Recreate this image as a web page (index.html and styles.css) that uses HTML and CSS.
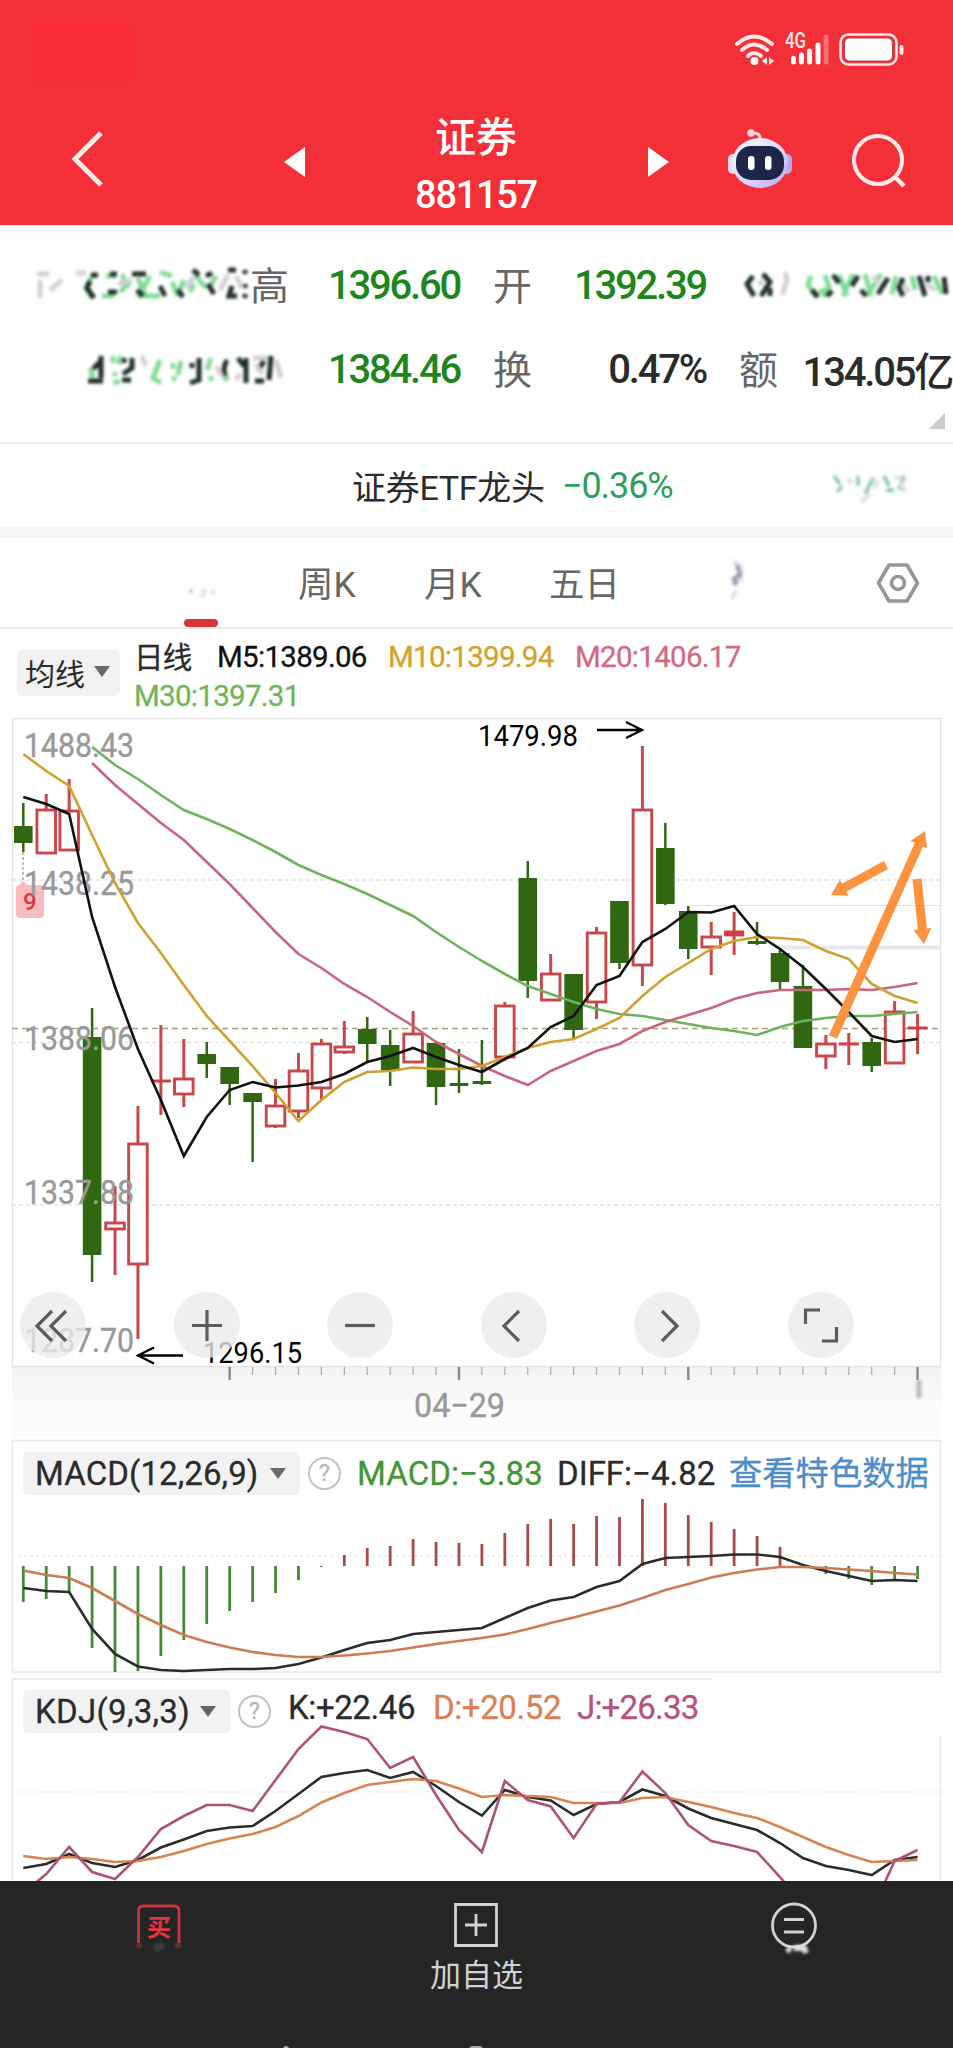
FILE: index.html
```html
<!DOCTYPE html>
<html lang="zh-CN">

<head>
    <meta charset="UTF-8">
    <meta name="viewport" content="width=device-width, initial-scale=1.0">
    <title>证券 881157</title>
    <link rel="stylesheet" href="styles.css">
</head>

<body>
    <header class="header">
        <div class="status-bar">
            <div class="carrier"></div>
            <svg class="status-icons" width="180" height="36" viewBox="730 30 180 36">
                <g fill="none" stroke="#ffe9e9" stroke-width="4" stroke-linecap="round">
                    <path d="M737 44 Q754 29 772 44" />
                    <path d="M742 50 Q754 39 767 50" />
                    <path d="M748 56 Q754 50 761 56" />
                </g>
                <circle cx="754.500" cy="61" r="4" fill="#fff" />
                <path d="M767 57v8l-5-4zM769 57v8l5-4z" fill="#ffe9e9" />
                <text x="785" y="48" class="net" textLength="21" lengthAdjust="spacingAndGlyphs">4G</text>
                <g stroke="#fff" stroke-width="5" stroke-linecap="round">
                    <path d="M793.500 58.500V62M801.500 55V62M809.500 51V62M818 45V62" />
                    <path d="M826 37V62" opacity=".3" />
                </g>
                <rect x="840.500" y="34.500" width="56" height="30" rx="8" fill="none" stroke="#ffe9e9" stroke-width="2.500" />
                <rect x="844.500" y="38" width="48" height="23" rx="5" fill="#fff" stroke="#a8484e" stroke-width="1" />
                <rect x="899.500" y="45" width="4" height="10" rx="2" fill="#ffe9e9" />
            </svg>
        </div>
        <div class="nav">
            <svg class="back" width="40" height="64" viewBox="0 0 40 64">
                <path d="M34 7 8 33 34 59" fill="none" stroke="#ffe9e9" stroke-width="5" />
            </svg>
            <svg class="prev" width="22" height="30" viewBox="0 0 22 30"><path d="M21 0V30L0 15z" fill="#fff" /></svg>
            <div class="title">
                <h1>证券</h1>
                <p>881157</p>
            </div>
            <svg class="next" width="22" height="30" viewBox="0 0 22 30"><path d="M1 0V30L22 15z" fill="#fff" /></svg>
            <svg class="robot" width="66" height="60" viewBox="727 129 66 60">
                <defs>
                    <linearGradient id="shell" x1="0" y1="0" x2="1" y2="1">
                        <stop offset="0" stop-color="#fff" />
                        <stop offset=".55" stop-color="#ddd6fb" />
                        <stop offset="1" stop-color="#b3a8f2" />
                    </linearGradient>
                </defs>
                <path d="M751 133q10-1 9 7" fill="none" stroke="#ffd5dc" stroke-width="3" />
                <circle cx="751" cy="133" r="3.800" fill="#ffd5dc" />
                <rect x="728" y="154" width="10" height="20" rx="5" fill="#e8dcf6" />
                <rect x="782" y="154" width="10" height="20" rx="5" fill="#b7a9ef" />
                <ellipse cx="760" cy="163" rx="28" ry="25" fill="url(#shell)" />
                <rect x="736" y="146" width="48" height="34" rx="15" fill="#1c2748" />
                <rect x="748" y="156" width="6.500" height="14" rx="3" fill="#fff" />
                <rect x="765" y="156" width="6.500" height="14" rx="3" fill="#fff" />
            </svg>
            <svg class="search" width="56" height="56" viewBox="0 0 56 56">
                <circle cx="27" cy="27" r="24" fill="none" stroke="#ffe9e9" stroke-width="4" />
                <path d="M43 43 53 53" stroke="#ffe9e9" stroke-width="4.500" />
            </svg>
        </div>
    </header>

    <section class="quotes">
        <svg class="masked" width="275" height="130" viewBox="20 260 275 130">
            <g class="smudge">
                <path class="faint" d="M37 274h12M40 280v18M76 273h10M50 290l12-10" />
                <path class="lime" d="M92 276l-6 12 6 10M106 276h10M122 274l6 14M138 278l8 20M150 276l-12 22M160 272l12 4M172 282l6 14M184 280l-6 14M196 276l10 12M216 276l-6 10M102 296h12M120 292l10-10M146 296h14M190 292l4-8" />
                <path class="dark" d="M91 275h7M110 274h7M90 281l-3 7 7 10M108 292h9M132 274h14M137 290l6 6M160 286l5 10M178 290l5 7M193 270l6 5M206 276l6-3M208 284l6 10M228 270h8M232 286l-3 10h8M245 270v4M245 284v4M245 294v4" />
                <path class="faint" d="M220 290l8-15M236 276l6 12M118 284l14-4M186 288l8-12" />
                <path class="dark" d="M101 356v22M101 361l-8 8M88 381h15M124 358v5M132 358v10l-9 6M122 380h9M199 358v22l-9 3M192 363v5M227 360q-6 10 0 20M246 358v25M255 381h9M264 361l-6 10M271 356l-2 24M238 358l6 8" />
                <path class="lime" d="M90 368l3 10M113 356v7M115 372v4M113 382h7M160 360l-7 18 8 5M173 363v6M174 376v5M181 361l-3 14M211 358l-4 12M211 376v5M223 378h5M121 356l-3 8" />
                <path class="faint" d="M240 374l-4 6M253 358h14M276 360l5 18M142 356l4 10M216 366l6 10M256 364l6 10" />
            </g>
        </svg>
        <div class="quote-rows">
            <div class="pair"><span>高</span><b class="down">1396.60</b></div>
            <div class="pair"><span>开</span><b class="down">1392.39</b></div>
            <svg class="masked-right" width="212" height="50" viewBox="741 260 212 50">
                <g class="smudge">
                    <path class="dark" d="M754 276l-6 8 7 12M764 274l7 8-9 14M771 288v8" />
                    <path class="faint" d="M786 272l2 8-5 15M760 280l3 5" />
                    <path class="lime" d="M812 276l-3 9 8 11M826 275l4 12-6 10M840 275l8 21M854 274l-10 22M866 274l6 22M882 274l-14 22M897 276l-4 18M913 276l3 14M935 276l8 18M820 292l12-4" />
                    <path class="dark" d="M834 275l6 8M833 291l-5 5M859 276l-6 10M862 290l5 6M889 278l-10 16M904 278l-4 10 4 8M920 276l6 20M929 276v6M945 277l2 17M813 290l6 7" />
                    <path class="faint" d="M874 276l6 8M910 292l-6-8M936 290l-8-6" />
                </g>
            </svg>
            <div class="pair only"><b class="down">1384.46</b></div>
            <div class="pair"><span>换</span><b>0.47%</b></div>
            <div class="pair"><span>额</span><b>134.05亿</b></div>
        </div>
        <div class="corner"></div>
    </section>

    <section class="etf">
        <span>证券ETF龙头</span>
        <span class="pct">−0.36%</span>
        <svg class="masked-etf" width="100" height="44" viewBox="820 466 100 44">
            <g class="smudge thin">
                <path class="teal" d="M834 478l6 8M842 488l-5 6M858 478v10M873 480l-8 16M884 478l5 10M886 492h8M904 478l-5 14" />
                <path class="faint" d="M848 480l3 6M862 504l8-10M878 482l-4 8M894 480h8M900 484l5 10" />
            </g>
        </svg>
    </section>

    <nav class="tabs">
        <div class="tab active"><svg width="32" height="14" viewBox="0 0 32 14"><g class="smudge thin"><path class="lime" d="M7 2v4" /><path class="faint" d="M21 2l-3 8M29 3v5" /></g></svg><i></i></div>
        <div class="tab">周K</div>
        <div class="tab">月K</div>
        <div class="tab">五日</div>
        <svg class="more" width="40" height="64" viewBox="720 560 40 64">
            <g class="smudge thin"><path class="faint" d="M733 570l8 6v12l-9 5M736 600l-4 8" /><path class="mauve" d="M737 574l3 10-8 5M737 590l-3 4" /></g>
        </svg>
        <svg class="setting" width="44" height="42" viewBox="0 0 44 42">
            <path d="M13 3H31L41.500 21 31 39H13L2.500 21z" fill="none" stroke="#969696" stroke-width="3.600" stroke-linejoin="round" />
            <circle cx="22" cy="21" r="6.500" fill="none" stroke="#969696" stroke-width="3.600" />
        </svg>
    </nav>

    <section class="ma">
        <div class="chip ma-chip">均线<i></i></div>
        <div class="ma-values">
            <span class="cn">日线</span>
            <span class="m5">M5:1389.06</span>
            <span class="m10">M10:1399.94</span>
            <span class="m20">M20:1406.17</span>
            <span class="m30">M30:1397.31</span>
        </div>
    </section>

    <section class="kline">
        <svg id="kline" width="953" height="720" viewBox="0 716 953 720"></svg>
        <div class="controls">
            <button><svg viewBox="0 0 66 66"><path d="M32 19 17 34l15 15M46 19 31 34l15 15" /></svg></button>
            <button><svg viewBox="0 0 66 66"><path d="M33 18V49M18 33.500H48" /></svg></button>
            <button><svg viewBox="0 0 66 66"><path d="M18 33.500H48" /></svg></button>
            <button><svg viewBox="0 0 66 66"><path d="M38 19 23 34l15 15" /></svg></button>
            <button><svg viewBox="0 0 66 66"><path d="M28 19 43 34 28 49" /></svg></button>
            <button><svg viewBox="0 0 66 66"><path d="M17.500 32V18H32M34 49H48.500V35" /></svg></button>
        </div>
    </section>

    <section class="sub macd">
        <svg id="macd" width="953" height="240" viewBox="0 1436 953 240"></svg>
        <div class="legend">
            <div class="chip macd-chip">MACD(12,26,9)<i></i></div>
            <div class="help">?</div>
            <span class="macd-val">MACD:−3.83</span>
            <span class="diff-val">DIFF:−4.82</span>
            <a class="link">查看特色数据</a>
        </div>
    </section>

    <section class="sub kdj">
        <svg id="kdj" width="953" height="205" viewBox="0 1676 953 205"></svg>
        <div class="legend">
            <div class="chip kdj-chip">KDJ(9,3,3)<i></i></div>
            <div class="help">?</div>
            <span class="k-val">K:+22.46</span>
            <span class="d-val">D:+20.52</span>
            <span class="j-val">J:+26.33</span>
        </div>
    </section>

    <footer class="footer">
        <div class="item">
            <svg width="60" height="60" viewBox="128 1896 60 60">
                <path d="M137.500 1943V1911q0-5 5-5H173q5 0 5 5V1943" fill="none" stroke="#c9363c" stroke-width="2.800" />
                <text x="146" y="1936" class="buy">买</text>
                <g class="smudge"><path d="M138 1944v3M177 1944v3" stroke="#a04038" /><path d="M153 1949l10-4" stroke="#344040" stroke-width="7" /></g>
            </svg>
        </div>
        <div class="item">
            <svg width="46" height="46" viewBox="0 0 46 46">
                <path d="M2.500 2.500H43.500V43.500H2.500zM23 12V34M12 23H34" fill="none" stroke="#d2d2d2" stroke-width="2.800" />
            </svg>
            <span>加自选</span>
        </div>
        <div class="item">
            <svg width="60" height="66" viewBox="764 1896 60 66">
                <circle cx="794" cy="1925.500" r="21.500" fill="none" stroke="#d2d2d2" stroke-width="2.800" />
                <path d="M784 1919.500H804M784 1932H804" stroke="#d2d2d2" stroke-width="2.800" />
                <g class="smudge"><path d="M787 1948l4 3M794 1948h10l2 5" stroke="#e4e4e4" stroke-width="6" /></g>
            </svg>
        </div>
        <div class="gesture"><i></i><i></i></div>
    </footer>

    <script src="script.js"></script>
</body>

</html>
```
FILE: styles.css
```css
* {
    margin: 0;
    padding: 0;
    box-sizing: border-box;
}

body {
    width: 953px;
    height: 2048px;
    overflow: hidden;
    background: #fff;
    color: #2b2b2b;
    font-family: Roboto, "Noto Sans CJK SC", sans-serif;
}

svg {
    display: block;
}

/* header */
.header {
    height: 225px;
    background: #f33038;
    color: #fff;
}

.status-bar {
    height: 96px;
    display: flex;
    justify-content: space-between;
    padding: 24px 43px 0 32px;
}

.carrier {
    width: 101px;
    height: 57px;
    background: #f72b37;
}

.status-icons {
    margin-top: 6px;
}

.net {
    font-size: 22px;
    font-weight: 500;
    fill: #ffe9e9;
}

.nav {
    height: 129px;
    display: grid;
    grid-template-columns: 67px 215px 133px 234px 79px 122px 103px;
}

.back {
    grid-column: 2;
    margin-top: 30px;
}

.prev {
    grid-column: 3;
    margin: 51px 0 0 2px;
}

.title {
    grid-column: 4;
    margin-left: -56px;
    width: 234px;
    text-align: center;
}

.title h1 {
    margin-top: 17px;
    font-size: 41px;
    font-weight: 500;
    line-height: 50px;
}

.title p {
    font-size: 38px;
    font-weight: 500;
    line-height: 64px;
    letter-spacing: -1.3px;
}

.next {
    grid-column: 5;
    margin: 51px 0 0 -2px;
}

.robot {
    grid-column: 6;
    margin: 33px 0 0 -1px;
}

.search {
    grid-column: 7;
    margin: 37px 0 0 1px;
}

/* unreadable, masked values */
.smudge {
    fill: none;
    stroke-width: 5;
    filter: blur(1.7px);
}

.thin {
    stroke-width: 4;
    opacity: 0.7;
}

.faint {
    stroke: #d5cfd8;
}

.lime {
    stroke: #7fdc93;
}

.dark {
    stroke: #1d2d26;
}

.teal {
    stroke: #5fb59c;
}

.mauve {
    stroke: #7b6690;
}

/* quotes */
.quotes {
    height: 219px;
    display: grid;
    grid-template-columns: 251px 702px;
    border-bottom: 2px solid #ededed;
}

.masked {
    grid-area: 1 / 1;
    margin: 35px 0 0 20px;
}

.quote-rows {
    grid-area: 1 / 2;
    display: grid;
    grid-template-columns: 209px 212px 212px;
    grid-template-rows: 84px 84px;
    column-gap: 34px;
    padding-top: 18px;
}

.pair {
    display: flex;
    justify-content: space-between;
    align-items: center;
    height: 84px;
    white-space: nowrap;
}

.only {
    justify-content: flex-end;
}

.pair span {
    margin: -4px 0 0 -1px;
    font-size: 39px;
    color: #666;
}

.pair b {
    font-size: 40px;
    font-weight: 500;
    letter-spacing: -2.2px;
}

.pair .down {
    color: #1d861d;
}

.masked-right {
    margin-top: 17px;
}

.corner {
    grid-area: 1 / 2;
    place-self: end;
    margin: 0 8px 13px 0;
    border-left: 16px solid transparent;
    border-bottom: 16px solid #ccc;
}

/* etf */
.etf {
    height: 94px;
    display: flex;
    align-items: center;
    padding-left: 352px;
    border-bottom: 11px solid #f5f5f5;
    font-size: 34px;
    white-space: nowrap;
}

.etf span:first-child {
    width: 192px;
    letter-spacing: -0.3px;
}

.etf .pct {
    width: 258px;
    margin-left: 18px;
    font-size: 36px;
    letter-spacing: -1.1px;
    color: #2f9e63;
}

/* tabs */
.tabs {
    height: 91px;
    display: grid;
    grid-template-columns: 184px 114px 126px 125px 171px 156px 77px;
    align-items: center;
    border-bottom: 2px solid #ebebeb;
    font-size: 35.5px;
    color: #666;
}

.tab {
    margin-top: -2px;
}

.tabs .active {
    grid-column: 2;
    align-self: end;
    width: 34px;
}

.active i {
    display: block;
    height: 8px;
    margin-top: 18px;
    background: #d6353a;
    border-radius: 4px;
}

/* moving averages */
.ma {
    height: 87px;
    display: flex;
    padding: 8px 0 0 17px;
}

.chip {
    display: flex;
    align-items: center;
    background: #f2f2f2;
    border-radius: 5px;
    white-space: nowrap;
}

.chip i {
    border: 8px solid transparent;
    border-top: 11px solid #686868;
    border-bottom: 0;
}

.ma-chip {
    width: 103px;
    height: 46px;
    margin-top: 13px;
    padding: 0 0 3px 8px;
    gap: 9px;
    font-size: 30px;
}

.ma-values {
    width: 640px;
    margin-left: 14px;
    display: grid;
    grid-template-columns: 83px 171px 187px 187px;
    grid-template-rows: 39px 39px;
    align-items: center;
    font-size: 29.5px;
    -webkit-text-stroke: 0.3px;
    letter-spacing: -0.7px;
    white-space: nowrap;
}

.cn {
    margin-top: -3px;
}

.m5 {
    color: #111;
}

.m10 {
    color: #d2a22d;
}

.m20 {
    color: #d06a80;
}

.m30 {
    color: #70b55b;
}

/* k line chart */
.kline {
    display: grid;
    height: 720px;
}

.kline > * {
    grid-area: 1 / 1;
}

.controls {
    align-self: end;
    display: flex;
    gap: 87.5px;
    padding: 0 0 78px 20px;
}

.controls button {
    width: 66px;
    height: 66px;
    border: none;
    border-radius: 50%;
    background: rgba(234, 234, 234, 0.78);
}

.controls path {
    fill: none;
    stroke: #5c5c5c;
    stroke-width: 3.2;
}

.axis-text {
    font-size: 33px;
    fill: #999;
    stroke: #999;
    stroke-width: 0.4;
}

.mark-text {
    font-size: 29px;
    fill: #000;
}

/* sub charts */
.sub {
    display: grid;
}

.sub > * {
    grid-area: 1 / 1;
}

.legend {
    display: flex;
    align-items: center;
    align-self: start;
    font-size: 33px;
    line-height: 42px;
    -webkit-text-stroke: 0.3px;
    white-space: nowrap;
}

.macd .legend {
    padding: 16px 0 0 23px;
}

.kdj .legend {
    padding: 14px 0 0 23px;
}

.macd-chip,
.kdj-chip {
    height: 43px;
    padding-left: 12px;
    justify-content: space-between;
    padding-right: 14px;
}

.macd-chip {
    width: 277px;
    letter-spacing: 0.1px;
}

.kdj-chip {
    width: 207px;
    letter-spacing: 0.3px;
}

.help {
    width: 33px;
    height: 33px;
    margin-left: 8px;
    border: 2px solid #c2c2c2;
    border-radius: 50%;
    color: #b5b5b5;
    font-size: 23px;
    line-height: 29px;
    text-align: center;
}

.macd-val {
    width: 200px;
    margin-left: 16px;
    letter-spacing: 0.1px;
    color: #439636;
}

.diff-val {
    width: 172px;
}

.link {
    font-size: 33.3px;
    color: #4c8dc9;
}

.k-val {
    width: 145px;
    margin: -8px 0 0 17px;
    letter-spacing: -0.4px;
}

.d-val {
    width: 144px;
    margin-top: -8px;
    letter-spacing: -0.4px;
    color: #dc8052;
}

.j-val {
    margin-top: -8px;
    letter-spacing: -0.8px;
    color: #b5527f;
}

/* footer */
.footer {
    position: relative;
    height: 167px;
    display: grid;
    grid-template-columns: 1fr 1fr 1fr;
    background: #252525;
    color: #d2d2d2;
}

.item {
    display: flex;
    flex-direction: column;
    align-items: center;
    padding-top: 15px;
    font-size: 31px;
    line-height: 40px;
}

.item:nth-child(2) {
    padding-top: 21px;
    gap: 8px;
}

.buy {
    font-size: 24px;
    font-weight: 700;
    fill: #e8343b;
}

.gesture {
    position: absolute;
    left: 283px;
    right: 470px;
    bottom: 0;
    height: 2px;
    overflow: hidden;
    display: flex;
    justify-content: space-between;
}

.gesture i {
    width: 6px;
    height: 8px;
    border-radius: 4px;
    background: #aaa;
}

.gesture i + i {
    width: 14px;
}
```
FILE: script.js
```js
const STEP = 22.93;
const LEFT = 23.3;
const px = i => LEFT + i * STEP;

const RED = '#c8474a';
const GREEN = '#306812';

// [high, body top, body bottom, low, up/down]
const candles = [
    [803, 826, 843, 852, 'd'], [794, 810, 853, 853, 'u'], [779, 811, 850, 850, 'u'], [1008, 1037, 1255, 1282, 'd'],
    [1186, 1223, 1229, 1275, 'u'], [1106, 1144, 1264, 1339, 'u'], [1025, 1081, 1081, 1115, 'u'], [1039, 1079, 1094, 1107, 'u'],
    [1042, 1054, 1064, 1078, 'd'], [1067, 1067, 1084, 1105, 'd'], [1093, 1093, 1102, 1162, 'd'], [1079, 1106, 1126, 1128, 'u'],
    [1053, 1071, 1111, 1118, 'u'], [1039, 1044, 1088, 1099, 'u'], [1021, 1047, 1052, 1054, 'u'], [1017, 1029, 1044, 1062, 'd'],
    [1030, 1045, 1070, 1086, 'd'], [1011, 1034, 1062, 1063, 'u'], [1043, 1043, 1087, 1105, 'd'], [1049, 1083, 1086, 1093, 'd'],
    [1040, 1081, 1084, 1085, 'd'], [1002, 1006, 1057, 1061, 'u'], [861, 878, 981, 998, 'd'], [954, 974, 1000, 1000, 'u'],
    [974, 974, 1030, 1038, 'd'], [927, 933, 1002, 1019, 'u'], [901, 901, 963, 969, 'd'], [746, 810, 965, 986, 'u'],
    [823, 848, 904, 905, 'd'], [906, 911, 949, 959, 'd'], [922, 937, 947, 975, 'u'], [912, 932, 934.9, 955, 'u'],
    [922, 941, 944, 945, 'd'], [950, 953, 982, 989, 'd'], [965, 986, 1048, 1048, 'd'], [1035, 1044, 1056, 1069, 'u'],
    [1033, 1044, 1044, 1065, 'u'], [1038, 1042, 1066, 1072, 'd'], [1001, 1012, 1063, 1064, 'u'], [1014, 1028, 1028, 1054, 'u']
];

const ma5 = [797, 804, 814, 917, 987, 1049, 1100, 1156, 1117, 1090, 1082, 1087.5, 1085.5, 1082, 1074, 1062, 1056, 1048, 1057, 1065, 1072, 1059, 1048, 1027, 1016, 985, 976, 942, 929, 912, 912.5, 906, 934, 949, 967, 989, 1012, 1036, 1042, 1039];
const ma10 = [754, 771, 786, 835, 883, 923, 953, 985, 1016, 1041, 1066, 1093, 1121, 1100, 1082, 1072, 1071, 1067.5, 1069, 1069, 1066, 1057, 1048, 1042, 1039, 1029, 1018, 996, 977, 963, 949, 941, 937, 938, 940, 951, 959, 984, 996, 1003];
const ma20 = [763, 785, 804, 823, 840, 862, 884, 908, 932, 954, 968, 984, 997, 1012, 1026, 1042, 1054, 1066, 1076, 1085, 1071, 1061, 1051, 1044, 1031, 1022, 1015, 1008, 999, 993, 990, 990, 990, 989, 990, 987, 983];
const ma30 = [747, 765, 779, 795, 810, 819, 829, 840, 852, 865, 875, 884, 894, 905, 916, 932, 947, 961, 974, 986, 994, 1002, 1009, 1014, 1016, 1020, 1024, 1028, 1031, 1035, 1027, 1021, 1018, 1016, 1016, 1014, 1012];

const macdBars = [1602, 1599, 1592, 1648, 1672, 1671, 1656, 1640, 1624, 1611, 1602, 1593, 1580, 1567, 1555, 1548, 1546, 1539, 1542, 1543, 1544, 1533, 1524, 1519, 1524, 1516, 1517, 1499, 1503, 1515, 1522, 1529, 1536, 1547, 1566, 1574, 1579, 1585, 1581, 1579];
const diff = [1588, 1591, 1592, 1629, 1654, 1666.5, 1670, 1671, 1670, 1669, 1669, 1668, 1664, 1657.5, 1650, 1643, 1640, 1634, 1632, 1630, 1628, 1618, 1608, 1600.5, 1597, 1587, 1581, 1564, 1558, 1557, 1556, 1554.5, 1554.5, 1557, 1565, 1571, 1576, 1581, 1580, 1581];
const dea = [1570.5, 1575, 1578, 1588, 1601, 1614, 1625, 1635, 1642, 1647.5, 1652, 1655, 1657, 1657, 1655.5, 1653.5, 1651, 1647.5, 1644, 1641, 1638, 1634.5, 1629, 1623, 1617.5, 1611.5, 1605.5, 1598, 1590, 1584, 1577.5, 1573, 1569.5, 1567, 1567, 1568, 1569.5, 1571, 1573, 1574.5];

const k = [1868, 1864, 1854, 1863, 1867, 1860, 1847.5, 1839.5, 1831, 1827.5, 1826, 1811, 1794, 1777, 1773, 1770, 1778, 1772, 1786, 1802, 1815.5, 1790, 1797, 1800.5, 1815, 1804, 1802, 1789.5, 1796, 1808.5, 1818, 1824, 1830, 1843, 1858, 1866, 1870, 1875, 1860, 1857];
const d = [1856, 1859, 1857, 1859, 1862, 1861, 1857, 1851, 1844, 1838.5, 1834, 1827, 1816, 1802.5, 1793, 1785, 1782, 1779, 1781, 1788.5, 1797, 1795, 1796, 1797, 1803, 1803, 1803, 1798, 1797, 1802, 1807, 1813, 1818, 1827, 1837, 1847, 1855, 1862, 1861, 1860];
const j = [1893, 1874, 1847, 1872, 1879, 1857, 1829, 1816, 1805, 1805, 1811, 1780, 1749, 1726.5, 1732, 1739, 1768, 1757, 1795, 1830, 1852, 1781, 1800, 1806.5, 1838, 1804, 1802, 1771.5, 1793, 1825, 1841, 1846, 1852, 1877, 1905, 1925, 1925, 1911, 1861, 1850];

function line(values, color, start = 0, width = 2.6) {
    const points = values.map((v, i) => `${px(i + start)},${v}`).join(' ');
    return `<polyline points="${points}" fill="none" stroke="${color}" stroke-width="${width}"/>`;
}

function seg(x1, y1, x2, y2, color, width = 1, dash = '') {
    return `<line x1="${x1}" y1="${y1}" x2="${x2}" y2="${y2}" stroke="${color}" stroke-width="${width}" stroke-dasharray="${dash}"/>`;
}

function text(x, y, width, str, cls) {
    return `<text x="${x}" y="${y}" class="${cls}" textLength="${width}" lengthAdjust="spacingAndGlyphs">${str}</text>`;
}

function candle([high, top, bottom, low, dir], i) {
    const x = px(i);
    if (dir === 'd') {
        return seg(x, high, x, low, GREEN, 2.5) +
            `<rect x="${x - 9.3}" y="${top}" width="18.6" height="${bottom - top}" fill="${GREEN}"/>`;
    }
    const wicks = seg(x, high, x, top, RED, 3) + seg(x, bottom, x, low, RED, 3);
    if (bottom - top < 3) {
        return wicks + seg(x - 10, (top + bottom) / 2, x + 10, (top + bottom) / 2, '#d43c40', bottom - top + 3);
    }
    return wicks + `<rect x="${x - 9.3}" y="${top}" width="18.6" height="${bottom - top}" fill="#fff" stroke="${RED}" stroke-width="2.9"/>`;
}

// orange hand-drawn arrow
function arrow(x1, y1, x2, y2) {
    const len = Math.hypot(x2 - x1, y2 - y1);
    const angle = Math.atan2(y2 - y1, x2 - x1) * 180 / Math.PI;
    return `<path transform="translate(${x1} ${y1}) rotate(${angle})" fill="#fb9340"
        d="M0 -4.500H${len - 15}V-9L${len} 0L${len - 15} 9V4.500H0z"/>`;
}

function drawKline() {
    let out = `<defs><linearGradient id="band" x1="0" y1="0" x2="0" y2="1">
        <stop offset="0" stop-color="#f3f3f3"/><stop offset=".5" stop-color="#fafafa"/><stop offset="1" stop-color="#fcfcfc"/></linearGradient></defs>
        <rect x="12" y="1367" width="929" height="69" fill="url(#band)"/>
        <rect x="12.5" y="718.5" width="928" height="648" fill="none" stroke="#e4e4e4" stroke-width="1.5"/>`;
    [880, 1042.5, 1205].forEach(y => out += seg(12, y, 941, y, '#e2e2e2', 1.5, '4 3'));
    out += seg(689, 905.5, 941, 905.5, '#e2e2e2');
    out += seg(775, 947.5, 941, 947.5, '#e8e8e8', 4);
    out += seg(12, 1028.5, 941, 1028.5, '#a5a57c', 1.7, '6 4');
    out += seg(23, 852, 23, 884, '#998', 1.2, '3 2');
    out += '<path d="M19 885l4-4 4 4z" fill="#f8bcbc"/><rect x="16" y="885" width="28" height="33" rx="4" fill="#f8bcbc"/>';
    out += '<text x="23" y="910" font-size="24" font-weight="500" fill="#cf3a3e">9</text>';
    out += candles.map(candle).join('');
    [['1488.43', 757], ['1438.25', 895], ['1388.06', 1050], ['1337.88', 1204], ['1287.70', 1352]]
        .forEach(([label, y]) => out += text(24, y, 110, label, 'axis-text'));
    out += line(ma30, '#6eb35c', 3) + line(ma20, '#c9657d', 3) + line(ma10, '#d0a031') + line(ma5, '#111');
    out += text(478, 746, 100, '1479.98', 'mark-text');
    out += '<path d="M597 730H641M626 722L642 730 626 738" fill="none" stroke="#000" stroke-width="2.3"/>';
    out += text(203, 1363, 99, '1296.15', 'mark-text');
    out += '<path d="M183 1355.500H139M154 1347.500L138 1355.500 154 1363.500" fill="none" stroke="#000" stroke-width="2.3"/>';
    out += arrow(833, 1037, 925, 831) + arrow(886, 865, 831, 895) + arrow(917, 879, 924, 944);
    for (let i = 9; i < 40; i++) {
        const major = i % 10 === 9;
        out += seg(px(i), 1367, px(i), major ? 1380 : 1375, major ? '#888' : '#aaa', major ? 2.4 : 1.2);
    }
    out += '<path d="M919 1380v18" stroke="#c0b4c0" stroke-width="4" class="smudge"/>';
    out += text(414, 1417, 91, '04−29', 'axis-text');
    document.getElementById('kline').innerHTML = out;
}

function drawMacd() {
    let out = '<rect x="12.5" y="1440.5" width="928" height="231.5" fill="none" stroke="#e8e8e8" stroke-width="1.5"/>';
    out += seg(12, 1556, 941, 1556, '#e4e4e4', 1.2, '3 3');
    macdBars.forEach((y, i) => {
        out += seg(px(i), 1566, px(i), y, y > 1566 ? '#448a35' : '#a9494b', 2.8);
    });
    out += line(diff, '#2a2d2c') + line(dea, '#cc7b52');
    document.getElementById('macd').innerHTML = out;
}

function drawKdj() {
    let out = '<path d="M12.500 1881V1679H712M940.500 1735V1881" fill="none" stroke="#e8e8e8" stroke-width="1.500"/>';
    out += seg(12, 1792, 941, 1792, '#e6e6e6', 1.2, '4 3');
    out += line(k, '#2a2d2c') + line(d, '#d68450') + line(j, '#ad5279');
    document.getElementById('kdj').innerHTML = out;
}

drawKline();
drawMacd();
drawKdj();
```
